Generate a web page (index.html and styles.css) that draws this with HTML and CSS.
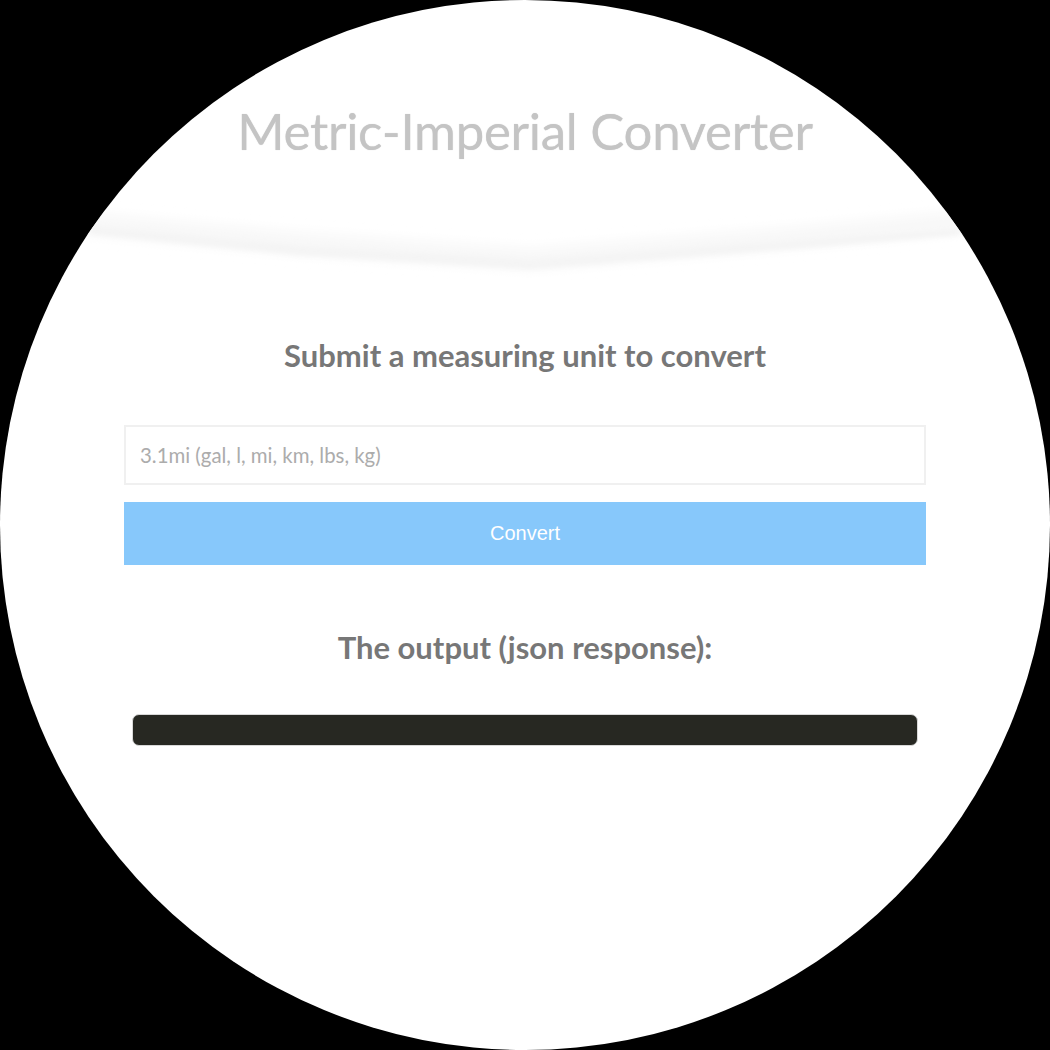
FILE: index.html
```html
<!DOCTYPE html>
<html lang="en">
<head>
<meta charset="utf-8">
<title>Metric-Imperial Converter</title>
<link rel="stylesheet" href="styles.css">
</head>
<body>
<div class="circle">
  <header class="header">
    <h1 class="title">Metric-Imperial Converter</h1>
    <svg class="header-shadow" width="1050" height="80" viewBox="0 0 1050 80" aria-hidden="true">
      <defs>
        <filter id="soft" x="-10%" y="-100%" width="120%" height="300%">
          <feGaussianBlur stdDeviation="6"/>
        </filter>
        <filter id="soft2" x="-10%" y="-100%" width="120%" height="300%">
          <feGaussianBlur stdDeviation="2.5"/>
        </filter>
      </defs>
      <path d="M60,10 L300,32 L530,48 L800,26 L990,8 L990,30 L800,48 L530,70 L300,55 L60,32 Z" fill="#f8f8f8" filter="url(#soft)"/>
      <path d="M90,26 L300,46 L530,60 L800,40 L960,28 L960,35 L800,48 L530,69 L300,55 L90,34 Z" fill="#f4f4f4" filter="url(#soft2)"/>
    </svg>
  </header>
  <main class="content">
    <h3 class="subtitle first">Submit a measuring unit to convert</h3>
    <form class="form">
      <input class="unit-input" type="text" placeholder="3.1mi (gal, l, mi, km, lbs, kg)">
      <button class="convert-btn" type="button">Convert</button>
    </form>
    <h3 class="subtitle second">The output (json response):</h3>
    <pre class="output"></pre>
  </main>
</div>
</body>
</html>
```

FILE: styles.css
```css
* { box-sizing: border-box; }

html, body {
  margin: 0;
  padding: 0;
  background: #000;
}

body {
  width: 1050px;
  height: 1050px;
  overflow: hidden;
  font-family: Lato, "Noto Sans", sans-serif;
}

.circle {
  width: 1050px;
  height: 1050px;
  border-radius: 50%;
  background: #fff;
  overflow: hidden;
  display: flex;
  flex-direction: column;
}

.header {
  display: flex;
  flex-direction: column;
  align-items: center;
  padding-top: 100px;
  height: 280px;
}

.title {
  margin: 0;
  font-family: Lato, sans-serif;
  font-weight: 400;
  font-size: 51px;
  line-height: 62px;
  color: #c4c4c4;
  letter-spacing: -0.3px;
  text-shadow: 0 0 1px #cfcfcf;
}

.header-shadow {
  display: block;
  margin-top: auto;
  flex: none;
}

.content {
  width: 802px;
  margin: 0 auto;
  display: flex;
  flex-direction: column;
}

.subtitle {
  margin: 0;
  text-align: center;
  font-family: Lato, sans-serif;
  font-weight: 700;
  font-size: 31px;
  line-height: 36px;
  color: #777;
}

.subtitle.first { margin-top: 57px; }
.subtitle.second { margin-top: 64px; }

.form {
  display: flex;
  flex-direction: column;
  gap: 17px;
  margin: 52px 0 0;
}

.unit-input {
  height: 60px;
  width: 100%;
  border: 2px solid #f0f0f0;
  padding: 0 14px;
  font-family: Lato, sans-serif;
  font-size: 20.4px;
  color: #555;
  background: #fff;
  outline: none;
}

.unit-input::placeholder {
  color: #acacac;
}

.convert-btn {
  height: 63px;
  width: 100%;
  border: none;
  background: #87c8fb;
  color: #fff;
  font-family: "Liberation Sans", Arial, sans-serif;
  font-size: 20px;
  padding: 0;
}

.output {
  margin: 49px 8px 0;
  height: 32px;
  background: #272822;
  border: 1px solid #d8d8d8;
  border-radius: 7px;
}
```
